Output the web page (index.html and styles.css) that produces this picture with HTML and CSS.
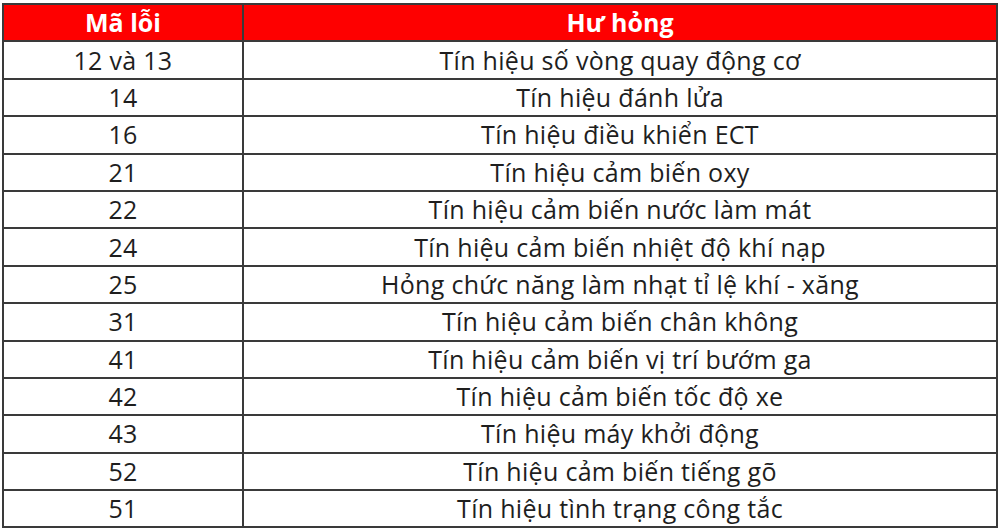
FILE: index.html
```html
<!DOCTYPE html>
<html lang="vi">
<head>
<meta charset="utf-8">
<link rel="stylesheet" href="styles.css">
</head>
<body>
<table class="codes">
  <colgroup><col class="c1"><col class="c2"></colgroup>
  <thead>
    <tr><th>Mã lỗi</th><th>Hư hỏng</th></tr>
  </thead>
  <tbody>
    <tr><td>12 và 13</td><td>Tín hiệu số vòng quay động cơ</td></tr>
    <tr><td>14</td><td>Tín hiệu đánh lửa</td></tr>
    <tr><td>16</td><td>Tín hiệu điều khiển ECT</td></tr>
    <tr><td>21</td><td>Tín hiệu cảm biến oxy</td></tr>
    <tr><td>22</td><td>Tín hiệu cảm biến nước làm mát</td></tr>
    <tr><td>24</td><td>Tín hiệu cảm biến nhiệt độ khí nạp</td></tr>
    <tr><td>25</td><td>Hỏng chức năng làm nhạt tỉ lệ khí - xăng</td></tr>
    <tr><td>31</td><td>Tín hiệu cảm biến chân không</td></tr>
    <tr><td>41</td><td>Tín hiệu cảm biến vị trí bướm ga</td></tr>
    <tr><td>42</td><td>Tín hiệu cảm biến tốc độ xe</td></tr>
    <tr><td>43</td><td>Tín hiệu máy khởi động</td></tr>
    <tr><td>52</td><td>Tín hiệu cảm biến tiếng gõ</td></tr>
    <tr><td>51</td><td>Tín hiệu tình trạng công tắc</td></tr>
  </tbody>
</table>
</body>
</html>
```
FILE: styles.css
```css
html, body {
  margin: 0;
  background: #fff;
}
body {
  padding: 3px 0 0 2px;
  font-family: "Open Sans", sans-serif;
}
.codes {
  border-collapse: collapse;
  width: 996px;
  table-layout: fixed;
  border: 2px solid #333;
}
.c1 { width: 240px; }
.codes th, .codes td {
  border: 2px solid #3a3a3a;
  height: 35.4px;
  padding: 0;
  text-align: center;
  vertical-align: middle;
  font-size: 25px;
  color: #1e1e1e;
  line-height: 1;
}
.codes td {
  letter-spacing: 0.3px;
}
.codes th {
  background: #fe0000;
  color: #fff;
  font-weight: 700;
}
```
